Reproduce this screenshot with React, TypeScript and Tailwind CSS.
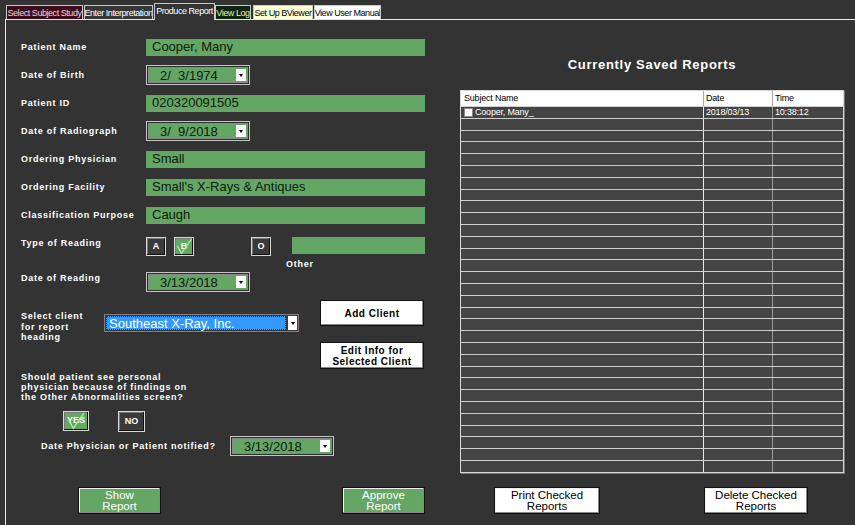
import React from "react";

const font = { fontFamily: '"Liberation Sans", Arial, sans-serif' };

function Label({ children, className = "" }: { children: React.ReactNode; className?: string }) {
  return (
    <div className={`text-[9px] font-bold tracking-[0.75px] leading-[10.5px] text-white ${className}`}>
      {children}
    </div>
  );
}

function TextField({ value, className = "" }: { value?: string; className?: string }) {
  return (
    <div
      className={`h-[17px] bg-[#64a664] pl-[6px] text-[13px] leading-[16px] text-[#0d1a0d] ${className}`}
    >
      {value}
    </div>
  );
}

function Arrow() {
  return (
    <div className="m-[1px] flex w-[10px] items-center justify-center bg-white">
      <div className="h-0 w-0 border-x-[2.5px] border-t-[3px] border-x-transparent border-t-black" />
    </div>
  );
}

function DateCombo({ value }: { value: string }) {
  return (
    <div className="flex h-[20px] w-[104px] border border-[#c4c4c4] bg-[#2e2e2e] p-[1px]">
      <div className="flex flex-1 border border-[#8a8a8a] bg-[#64a664]">
        <div className="flex-1 whitespace-pre pl-[11px] text-[13px] leading-[16px] text-[#0d1a0d]">{value}</div>
        <Arrow />
      </div>
    </div>
  );
}

function Check() {
  return (
    <svg className="pointer-events-none absolute inset-0" viewBox="0 0 20 20" width="100%" height="100%">
      <path d="M2 9 L7 18 L19 1" fill="none" stroke="#a8f0a0" strokeWidth="1.4" />
    </svg>
  );
}

function SqButton({
  children,
  on,
  className = "",
}: {
  children: React.ReactNode;
  on?: boolean;
  className?: string;
}) {
  return (
    <div
      className={`relative flex items-center justify-center border border-[#d8d8d8] text-[9px] font-bold text-white shadow-[inset_-1px_-1px_0_#111,inset_1px_1px_0_#777] ${
        on ? "bg-[#64a664]" : "bg-[#3a3a3a]"
      } ${className}`}
    >
      {children}
      {on && <Check />}
    </div>
  );
}

function WinButton({
  lines,
  green,
  className = "",
}: {
  lines: string[];
  green?: boolean;
  className?: string;
}) {
  return (
    <div
      className={`flex h-[27px] flex-col items-center justify-center border border-[#111] text-[11.5px] leading-[11px] shadow-[inset_-1px_-1px_0_#888,inset_1px_1px_0_#eee] ${
        green ? "bg-[#64a664] text-white" : "bg-white text-black"
      } ${className}`}
    >
      {lines.map((l) => (
        <div key={l}>{l}</div>
      ))}
    </div>
  );
}

function Tab({
  label,
  cls,
  w,
  selected,
}: {
  label: string;
  cls: string;
  w: string;
  selected?: boolean;
}) {
  return (
    <div
      className={`flex justify-center overflow-hidden whitespace-nowrap border-x border-t border-[#c8c8c8] text-[9px] leading-[12px] tracking-[-0.45px] ${w} ${cls} ${
        selected ? "relative -mb-[1px] h-[17px] items-start pt-[1px]" : "h-[14px] items-center"
      }`}
    >
      {label}
    </div>
  );
}

const rows = Array.from({ length: 31 }, (_, i) => i);

export default function App() {
  return (
    <div className="h-[525px] w-[855px] overflow-hidden bg-[#333333]" style={font}>
      {/* tabs */}
      <div className="flex h-[19px] items-end pl-[6px]">
        <Tab label="Select Subject Study" w="w-[77px] mr-[1px]" cls="bg-[#3d0c1c] text-[#f3d2e0]" />
        <Tab label="Enter Interpretation" w="w-[69px] mr-[1px]" cls="bg-[#363636] text-white" />
        <Tab label="Produce Report" w="w-[61px]" cls="bg-[#333333] text-white" selected />
        <Tab label="View Log" w="w-[36px] mr-[2px]" cls="bg-[#0f2410] text-[#e8f0a8]" />
        <Tab label="Set Up BViewer" w="w-[60px] mr-[1px]" cls="bg-[#ffffd6] text-black" />
        <Tab label="View User Manual" w="w-[67px]" cls="bg-white text-black" />
      </div>

      {/* panel */}
      <div className="ml-[5px] h-[506px] border-l border-t border-[#e8e8e8]">
        <div className="flex h-[467px]">
          {/* left column */}
          <div className="w-[454px] pl-[15px]">
            <div className="mt-[13px]">
              {[
                ["Patient Name", "text", "Cooper, Many"],
                ["Date of Birth", "date", "2/  3/1974"],
                ["Patient ID", "text", "020320091505"],
                ["Date of Radiograph", "date", "3/  9/2018"],
                ["Ordering Physician", "text", "Small"],
                ["Ordering Facility", "text", "Small's X-Rays & Antiques"],
                ["Classification Purpose", "text", "Caugh"],
              ].map(([label, kind, value]) => (
                <div key={label} className="flex h-[28px] items-center">
                  <Label className="w-[125px] pt-[1px]">{label}</Label>
                  {kind === "text" ? (
                    <TextField value={value} className="w-[279px]" />
                  ) : (
                    <DateCombo value={value} />
                  )}
                </div>
              ))}
            </div>

            {/* type of reading */}
            <div className="mt-[8px] flex h-[34px]">
              <Label className="w-[125px] pt-[1px]">Type of Reading</Label>
              <SqButton className="h-[19px] w-[20px]">A</SqButton>
              <SqButton on className="ml-[8px] h-[19px] w-[20px]">
                B
              </SqButton>
              <SqButton className="ml-[57px] h-[19px] w-[20px]">O</SqButton>
              <div className="ml-[21px] flex flex-col">
                <TextField className="h-[16px] w-[133px]" />
                <Label className="ml-[-6px] mt-[5px]">Other</Label>
              </div>
            </div>

            {/* date of reading */}
            <div className="mt-[1px] flex">
              <Label className="w-[125px] pt-[1px]">Date of Reading</Label>
              <DateCombo value="3/13/2018" />
            </div>

            {/* client */}
            <div className="mt-[8px] flex">
              <Label className="mt-[11px] w-[83px]">
                Select client
                <br />
                for report
                <br />
                heading
              </Label>
              <div className="mt-[14px] flex h-[18px] w-[195px] border border-[#8a7a7a] bg-[#3a3a3a] p-[1px]">
                <div className="flex-1 border border-dotted border-[#333] bg-[#3399ff] pl-[2px] text-[13px] leading-[13px] text-white">
                  Southeast X-Ray, Inc.
                </div>
                <div className="ml-[2px] flex w-[9px] items-center justify-center bg-white">
                  <div className="h-0 w-0 border-x-[2.5px] border-t-[3px] border-x-transparent border-t-black" />
                </div>
              </div>
              <div className="ml-[21px] flex flex-col">
                <div className="flex h-[26px] w-[104px] items-center justify-center border border-[#111] bg-white text-[10px] font-bold tracking-[0.5px] text-black shadow-[inset_-1px_-1px_0_#888]">
                  Add Client
                </div>
                <div className="mt-[16px] flex h-[27px] w-[104px] flex-col items-center justify-center border border-[#111] bg-white text-[10px] font-bold leading-[11px] tracking-[0.5px] text-black shadow-[inset_-1px_-1px_0_#888]">
                  <div>Edit Info for</div>
                  <div>Selected Client</div>
                </div>
              </div>
            </div>

            <Label className="mt-[3px] leading-[10px]">
              Should patient see personal
              <br />
              physician because of findings on
              <br />
              the Other Abnormalities screen?
            </Label>

            <div className="mt-[9px] flex">
              <SqButton on className="ml-[42px] h-[20px] w-[26px]">
                YES
              </SqButton>
              <SqButton className="ml-[29px] h-[21px] w-[27px]">NO</SqButton>
            </div>

            <div className="mt-[4px] flex items-center">
              <Label className="ml-[20px] w-[189px]">Date Physician or Patient notified?</Label>
              <DateCombo value="3/13/2018" />
            </div>
          </div>

          {/* right column */}
          <div className="w-[384px]">
            <div className="mt-[37px] text-center text-[13px] font-bold leading-[16px] tracking-[0.7px] text-white">
              Currently Saved Reports
            </div>
            <div className="mt-[17px] h-[383px] overflow-hidden border border-[#d8d8d8] bg-[#444] shadow-[1px_1px_0_#777]">
              <div className="flex h-[15px] bg-white text-[9px] leading-[15px] tracking-[-0.2px] text-black">
                <div className="w-[243px] border-r border-[#aaa] pl-[3px]">Subject Name</div>
                <div className="w-[69px] border-r border-[#aaa] pl-[2px]">Date</div>
                <div className="flex-1 pl-[2px]">Time</div>
              </div>
              {rows.map((i) => (
                <div
                  key={i}
                  className="flex h-[11.8px] border-t border-[#d0d0d0] text-[9px] leading-[10px] tracking-[-0.2px] text-white"
                >
                  <div className="flex w-[243px] items-center border-r border-[#e8e8e8] pl-[3px]">
                    {i === 0 && (
                      <>
                        <div className="mr-[2px] h-[9px] w-[9px] border border-[#888] bg-white" />
                        Cooper, Many_
                      </>
                    )}
                  </div>
                  <div className="w-[69px] border-r border-[#999] pl-[2px]">{i === 0 && "2018/03/13"}</div>
                  <div className="flex-1 pl-[2px]">{i === 0 && "10:38:12"}</div>
                </div>
              ))}
            </div>
          </div>
        </div>

        {/* bottom buttons */}
        <div className="flex">
          <WinButton green lines={["Show", "Report"]} className="ml-[72px] w-[83px]" />
          <WinButton green lines={["Approve", "Report"]} className="ml-[181px] w-[83px]" />
          <WinButton lines={["Print Checked", "Reports"]} className="ml-[69px] w-[106px]" />
          <WinButton lines={["Delete Checked", "Reports"]} className="ml-[104px] w-[104px]" />
        </div>
      </div>
    </div>
  );
}
